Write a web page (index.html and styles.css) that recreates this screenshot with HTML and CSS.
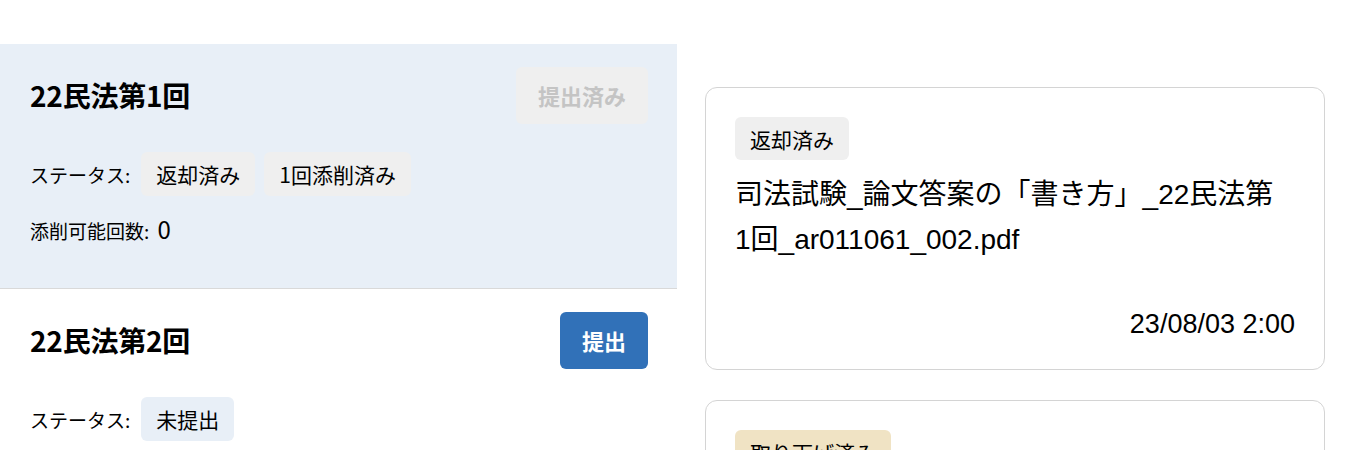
FILE: index.html
```html
<!DOCTYPE html>
<html lang="ja">
<head>
  <meta charset="UTF-8">
  <meta name="viewport" content="width=device-width, initial-scale=1.0">
  <title>答案提出</title>
  <link rel="stylesheet" href="styles.css">
</head>
<body>

<div class="page">
  <!-- 答案一覧 -->
  <div class="exam-list">
    <div class="exam-item active">
      <div class="exam-head">
        <h2>22民法第1回</h2>
        <button class="submit-button" disabled>提出済み</button>
      </div>
      <div class="status-row">
        <span class="label">ステータス:</span>
        <span class="tag">返却済み</span>
        <span class="tag">1回添削済み</span>
      </div>
      <div class="count-row">添削可能回数: <span class="count">0</span></div>
    </div>

    <div class="exam-item">
      <div class="exam-head">
        <h2>22民法第2回</h2>
        <button class="submit-button">提出</button>
      </div>
      <div class="status-row">
        <span class="label">ステータス:</span>
        <span class="tag tag-blue">未提出</span>
      </div>
    </div>
  </div>

  <!-- ファイル一覧 -->
  <div class="file-list">
    <div class="file-card">
      <span class="tag">返却済み</span>
      <div class="file-name">司法試験_論文答案の「書き方」_22民法第1回_ar011061_002.pdf</div>
      <div class="file-date">23/08/03 2:00</div>
    </div>
    <div class="file-card">
      <span class="tag tag-yellow">取り下げ済み</span>
      <div class="file-name">司法試験_論文答案の「書き方」_22民法第1回_ar011061_001.pdf</div>
      <div class="file-date">23/08/01 10:00</div>
    </div>
  </div>
</div>

</body>
</html>
```

FILE: styles.css
```css
body {
  font-family: "Noto Sans CJK JP", sans-serif;
  background-color: #fff;
  color: #000;
  margin: 0;
}

.page {
  display: flex;
  gap: 28px;
  padding-top: 44px;
}

.exam-list {
  width: 677px;
  flex-shrink: 0;
}

.exam-item {
  padding: 22px 29px 47px 30px;
  border-bottom: 1px solid #d9d9d9;
}

.exam-item.active {
  background-color: #e8eff7;
}

.exam-head {
  display: flex;
  justify-content: space-between;
  align-items: center;
  height: 58px;
}

h2 {
  margin: 0;
  font-size: 28px;
  font-weight: bold;
  letter-spacing: -0.2px;
}

.submit-button {
  height: 57px;
  padding: 0 22px;
  border: none;
  border-radius: 6px;
  background-color: #3171b8;
  color: #fff;
  font-family: inherit;
  font-size: 22px;
  font-weight: bold;
  cursor: pointer;
}

.submit-button:disabled {
  background-color: #efefef;
  color: #c4c4c4;
  cursor: default;
}

.status-row {
  display: flex;
  align-items: center;
  gap: 9px;
  margin-top: 28px;
}

.label {
  font-size: 19px;
  margin-right: 2px;
}

.tag {
  display: inline-flex;
  align-items: center;
  height: 44px;
  padding: 0 15px;
  border-radius: 6px;
  background-color: #efefef;
  font-size: 21px;
}

.tag-blue {
  background-color: #e8eff7;
}

.tag-yellow {
  background-color: #f0e3c4;
}

.count-row {
  margin-top: 21px;
  height: 24px;
  font-size: 19px;
  line-height: 24px;
}

.count {
  margin-left: 4px;
  font-size: 24px;
  line-height: 1;
}

.file-list {
  width: 620px;
  padding-top: 43px;
  display: flex;
  flex-direction: column;
  gap: 30px;
}

.file-card {
  display: flex;
  flex-direction: column;
  align-items: flex-start;
  box-sizing: border-box;
  height: 283px;
  padding: 29px 29px 27px 29px;
  border: 1px solid #d4d4d4;
  border-radius: 12px;
}

.file-card .tag {
  height: 43px;
  padding: 0 15px;
  font-size: 21px;
}

.file-name {
  margin-top: 12px;
  padding-right: 12px;
  font-family: "Liberation Sans", "Noto Sans CJK JP", sans-serif;
  font-size: 28px;
  line-height: 45px;
}

.file-date {
  margin-top: auto;
  align-self: flex-end;
  font-family: "Liberation Sans", "Noto Sans CJK JP", sans-serif;
  font-size: 27px;
  line-height: 36px;
}
```
